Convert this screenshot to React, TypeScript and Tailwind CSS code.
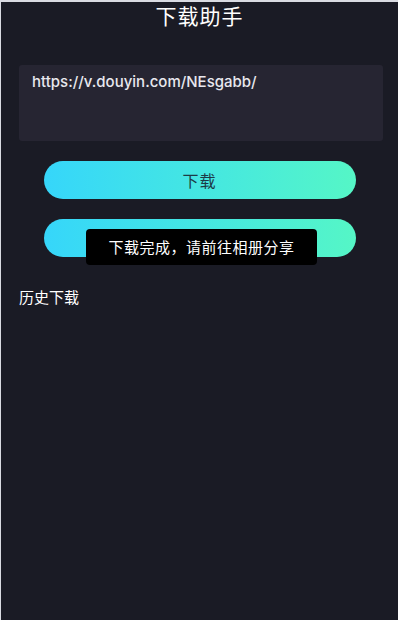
import React from 'react';

const font = { fontFamily: '"Noto Sans CJK SC", "Noto Sans", sans-serif' };

const GradientButton: React.FC<{ label?: string }> = ({ label }) => (
  <button className="w-[312px] h-[38px] mx-auto rounded-full bg-gradient-to-r from-[#36d6fa] to-[#55f6c6] text-[16px] tracking-[1px] text-[#1d3b47] flex items-center justify-center">
    {label}
  </button>
);

export default function App() {
  return (
    <div
      className="w-[398px] h-[620px] bg-[#1a1b25] border-t-2 border-l border-[#d9dbe2] flex flex-col text-white"
      style={font}
    >
      <h1 className="text-center text-[21px] leading-[26px] tracking-[1px]">下载助手</h1>

      <div className="ml-[18px] w-[364px] mt-[37px] h-[76px] rounded-[3px] bg-[#262532] px-[13px] pt-[7px]">
        <p className="text-[15px] leading-[20px] font-medium text-[#e8e8ee]" style={{ fontFamily: 'Inter, "Noto Sans", sans-serif' }}>
          https://v.douyin.com/NEsgabb/
        </p>
      </div>

      <div className="mt-[20px] flex flex-col gap-[20px]">
        <GradientButton label="下载" />
        <div className="relative">
          <GradientButton />
          <div className="absolute left-[85px] top-[10px] w-[231px] h-[36px] rounded-[4px] bg-black flex items-center justify-center text-[15px] tracking-[0.5px]">
            下载完成，请前往相册分享
          </div>
        </div>
      </div>

      <p className="mx-[18px] mt-[30px] text-[15px] leading-[20px]">历史下载</p>
    </div>
  );
}
